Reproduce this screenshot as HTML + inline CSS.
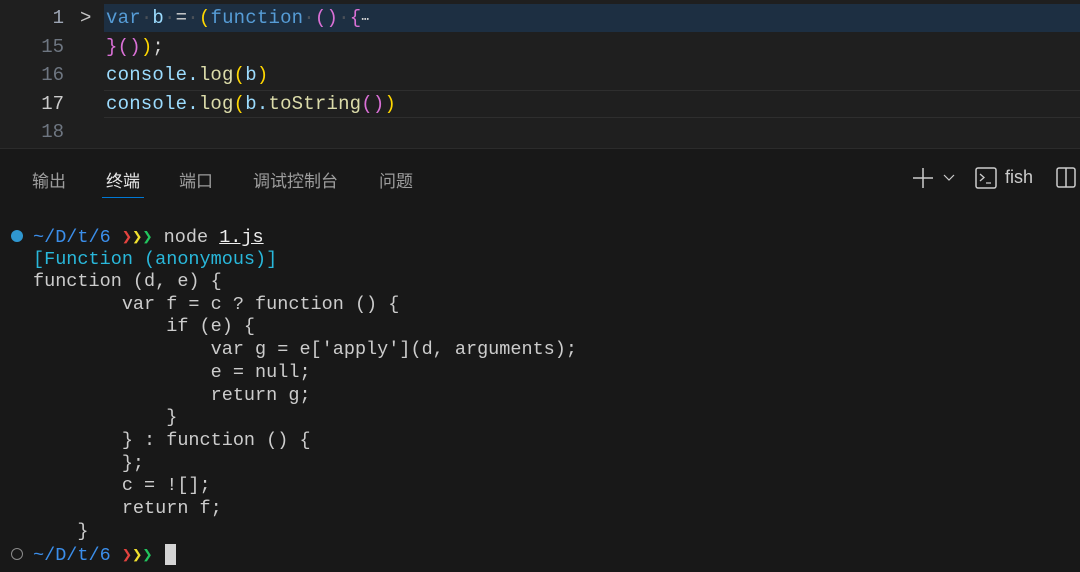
<!DOCTYPE html>
<html><head><meta charset="utf-8"><style>
*{margin:0;padding:0;box-sizing:border-box}
body{width:1080px;height:572px;overflow:hidden;background:#181818;font-family:"Liberation Mono",monospace;position:relative}
#ed{position:absolute;left:0;top:0;width:1080px;height:149px;background:#1f1f1f;border-bottom:1px solid #2b2b2b}
.l{position:absolute;left:0;height:28px;width:1080px;font-size:19px;line-height:28px;white-space:pre;color:#9cdcfe}
.hl{position:absolute;left:104px;right:0;height:28px}
.n{position:absolute;width:64px;text-align:right;color:#6e7681}
.c{position:absolute;left:106px;letter-spacing:0.2px}
.d{color:#4a5058}.y{color:#ffd700}.p{color:#da70d6}.k{color:#569cd6}.f{color:#dcdcaa}.w{color:#d4d4d4}
.t{position:absolute;left:0;font-size:18.5px;line-height:22.7px;white-space:pre;color:#cccccc}
.tab{position:absolute;top:167px;font-family:"Liberation Sans","Noto Sans CJK SC",sans-serif;font-size:17px;color:#9d9d9d}
.ch{font-weight:bold;font-family:"DejaVu Sans Mono",monospace;font-size:17px}
</style></head><body>
<div id="ed">
<div class="hl" style="top:4px;background:#1d2f42"></div>
<div class="hl" style="top:90px;border-top:1px solid #2e2e2e;border-bottom:1px solid #2e2e2e"></div>
<div class="l" style="top:4px"><span class="n" style="color:#9da5b4">1</span><span style="position:absolute;left:80px;color:#c5c5c5">&gt;</span><span class="c"><span class="k">var</span><span class="d">·</span>b<span class="d">·</span><span class="w">=</span><span class="d">·</span><span class="y">(</span><span class="k">function</span><span class="d">·</span><span class="p">()</span><span class="d">·</span><span class="p">{</span><span class="w" style="font-size:13px">⋯</span></span></div>
<div class="l" style="top:33px"><span class="n">15</span><span class="c"><span class="p">}()</span><span class="y">)</span><span class="w">;</span></span></div>
<div class="l" style="top:61px"><span class="n">16</span><span class="c">console.<span class="f">log</span><span class="y">(</span>b<span class="y">)</span></span></div>
<div class="l" style="top:90px"><span class="n" style="color:#cccccc">17</span><span class="c">console.<span class="f">log</span><span class="y">(</span>b.<span class="f">toString</span><span class="p">()</span><span class="y">)</span></span></div>
<div class="l" style="top:118px"><span class="n">18</span></div>
</div>
<div class="tab" style="left:32px">输出</div>
<div class="tab" style="left:106px;color:#e7e7e7">终端</div>
<div style="position:absolute;left:102px;top:197px;width:42px;height:1px;background:#0078d4"></div>
<div class="tab" style="left:179px">端口</div>
<div class="tab" style="left:253px">调试控制台</div>
<div class="tab" style="left:379px">问题</div>
<svg style="position:absolute;left:910px;top:166px" width="170" height="26" fill="none" stroke="#cccccc" stroke-width="1.5">
<path d="M3 12H23M13 2V22"/><path d="M34 9l5 5 5-5" stroke-width="1.2"/>
<rect x="66" y="2" width="20" height="20" rx="2"/><path d="M70 8l4 3.5-4 3.5M76 17h5" stroke-width="1.3"/>
<rect x="147" y="2" width="18" height="19" rx="2"/><path d="M156 2v19"/>
</svg>
<div style="position:absolute;left:1005px;top:167px;font-family:'Liberation Sans',sans-serif;font-size:18px;color:#cccccc">fish</div>
<div style="position:absolute;left:11px;top:230px;width:12px;height:12px;border-radius:50%;background:#2f97d0"></div>
<div class="t" style="top:226px;left:33px"><span style="color:#3b8eea">~/D/t/6</span> <span class="ch" style="color:#e4433f">❯</span><span class="ch" style="color:#f0e12e">❯</span><span class="ch" style="color:#22c55e">❯</span> node <span style="color:#eee;text-decoration:underline">1.js</span></div>
<div class="t" style="top:249px;left:33px;color:#29b8db">[Function (anonymous)]</div>
<div class="t" style="top:271px;left:33px">function (d, e) {
        var f = c ? function () {
            if (e) {
                var g = e['apply'](d, arguments);
                e = null;
                return g;
            }
        } : function () {
        };
        c = ![];
        return f;
    }</div>
<div style="position:absolute;left:11px;top:548px;width:12px;height:12px;border-radius:50%;border:1.5px solid #8a8a8a"></div>
<div class="t" style="top:544px;left:33px"><span style="color:#3b8eea">~/D/t/6</span> <span class="ch" style="color:#e4433f">❯</span><span class="ch" style="color:#f0e12e">❯</span><span class="ch" style="color:#22c55e">❯</span> </div>
<div style="position:absolute;left:165px;top:544px;width:11px;height:21px;background:#d4d4d4"></div>
</body></html>
